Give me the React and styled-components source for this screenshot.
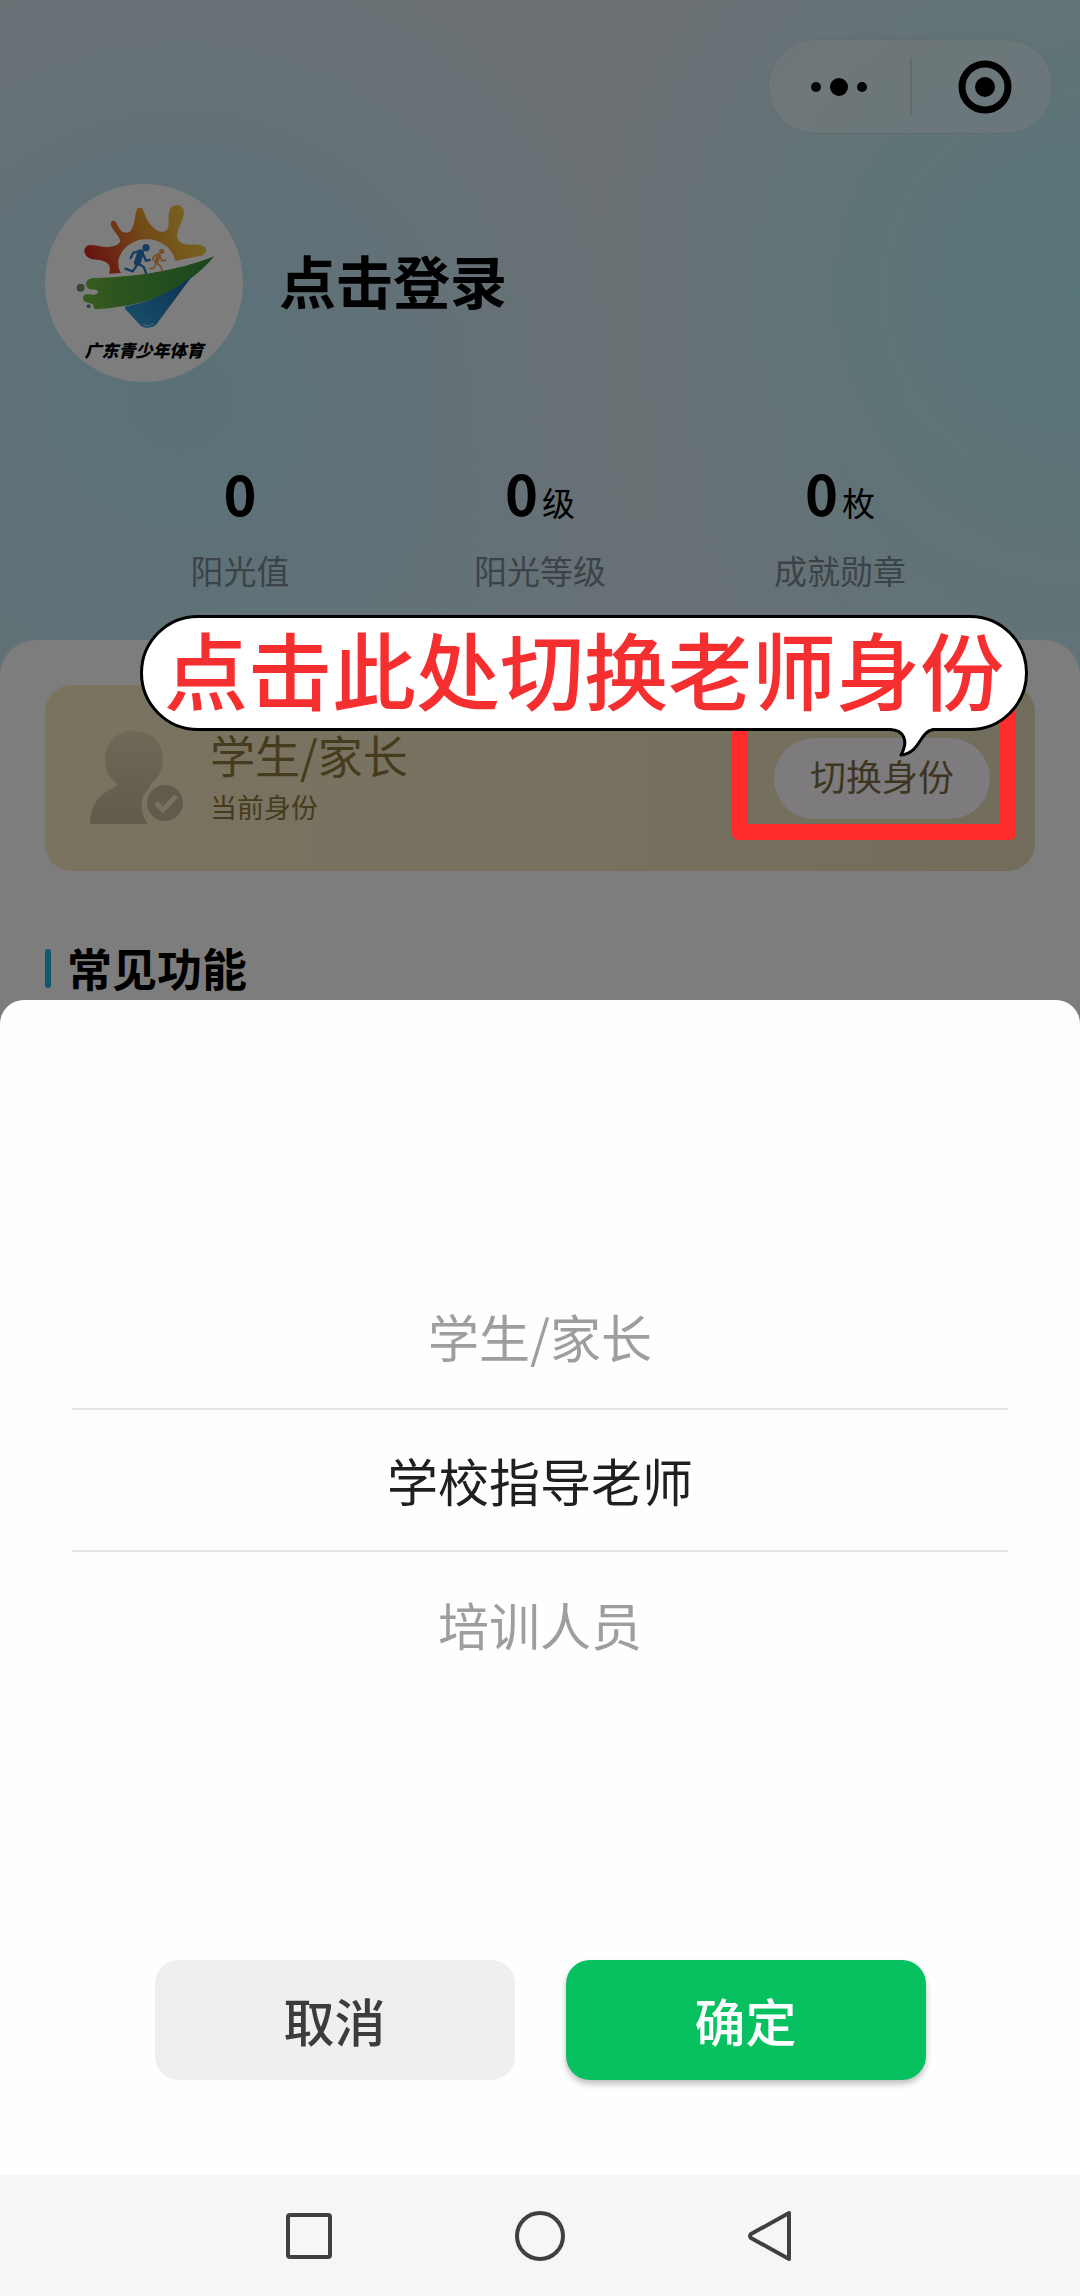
import React, { useState } from 'react';
import styled, { createGlobalStyle } from 'styled-components';

const GlobalStyle = createGlobalStyle`
  * {
    box-sizing: border-box;
  }
  body {
    margin: 0;
    background-color: #808080;
    font-family: "Noto Sans CJK SC", "Noto Sans", sans-serif;
  }
  button {
    margin: 0;
    padding: 0;
    border: 0;
    background: none;
    color: inherit;
    font: inherit;
    cursor: pointer;
  }
`;

const Page = styled.div`
  display: flex;
  flex-direction: column;
  min-height: 100vh;
  background-color: #7d7d7d;
`;

const Home = styled.main`
  position: relative;
  overflow: hidden;
  background:
    radial-gradient(circle at 100% 290px, #b4eef4 0, #bbedf4 150px, transparent 480px),
    radial-gradient(circle at 180px 400px, #b8e7f4 0, #bfe7f4 130px, transparent 460px),
    linear-gradient(180deg, #dae6ef 0, #dae7ef 420px, #d1e6ef 640px);
`;

const Mask = styled.div`
  position: absolute;
  inset: 0;
  z-index: 1;
  background-color: rgba(0, 0, 0, 0.51);
`;

const TopBar = styled.header`
  display: flex;
  justify-content: flex-end;
  padding: 39px 27px 0;
`;

const Capsule = styled.div`
  display: grid;
  grid-template-columns: 1fr 2px 1fr;
  align-items: center;
  width: 285px;
  height: 95px;
  border: 1px solid #d0dce0;
  border-radius: 48px;
  background-color: rgba(255, 255, 255, 0.4);
  & button {
    display: flex;
    align-items: center;
    justify-content: center;
    height: 100%;
  }
  & button + span + button {
    padding-left: 6px;
  }
`;

const CapsuleLine = styled.span`
  height: 58px;
  background-color: #d0d8da;
`;

const Profile = styled.section`
  display: flex;
  align-items: center;
  gap: 36px;
  padding: 50px 45px 0;
`;

const Avatar = styled.div`
  display: flex;
  flex-direction: column;
  align-items: center;
  width: 198px;
  height: 198px;
  overflow: hidden;
  border-radius: 50%;
  background-color: #fff;
`;

const AvatarText = styled.span`
  font-size: 17px;
  font-style: italic;
  font-weight: 900;
  line-height: 36px;
`;

const LoginButton = styled.button`
  && {
    padding-bottom: 8px;
    font-size: 57px;
    font-weight: 700;
    line-height: 80px;
  }
`;

const Stats = styled.section`
  display: grid;
  grid-template-columns: repeat(3, 1fr);
  padding: 68px 90px 46px;
`;

const Stat = styled.div`
  display: flex;
  flex-direction: column;
  align-items: center;
  gap: 12px;
`;

const StatValue = styled.strong`
  font-size: 56px;
  font-weight: 700;
  line-height: 84px;
  & small {
    margin-left: 4px;
    font-size: 33px;
    font-weight: 400;
    line-height: 33px;
  }
`;

const StatLabel = styled.span`
  color: #7a8a92;
  font-size: 33px;
  line-height: 48px;
`;

const Body = styled.section`
  padding: 45px 45px 0;
  border-radius: 36px 36px 0 0;
  background-color: #fff;
`;

const IdentityCard = styled.div`
  display: flex;
  align-items: center;
  height: 186px;
  padding: 0 45px;
  border-radius: 27px;
  background: linear-gradient(90deg, #f6ebc4 0, #f5e8c4 45%, #e8deba 100%);
`;

const Identity = styled.div`
  display: flex;
  flex: 1;
  flex-direction: column;
  margin-left: 26px;
  padding-bottom: 2px;
  color: #8d7b3c;
`;

const IdentityName = styled.span`
  font-size: 45px;
  line-height: 60px;
`;

const IdentityHint = styled.span`
  font-size: 27px;
  line-height: 44px;
`;

const SwitchBox = styled.div`
  position: relative;
`;

const SwitchButton = styled.button`
  && {
    width: 216px;
    height: 81px;
    padding-bottom: 6px;
    border-radius: 41px;
    background-color: #fffaff;
    color: #7f6d42;
    font-size: 36px;
  }
`;

// guide marks, drawn above the mask
const Highlight = styled.div`
  position: absolute;
  z-index: 2;
  top: -48px;
  right: -26px;
  bottom: -21px;
  left: -42px;
  border: 16px solid #ff2c2c;
  border-radius: 6px;
  pointer-events: none;
`;

const Callout = styled.div`
  position: absolute;
  z-index: 3;
  top: -123px;
  right: -38px;
  height: 116px;
  padding: 0 21px;
  border: 3px solid #000;
  border-radius: 58px;
  background-color: #fff;
  color: #f52f2f;
  font-size: 84px;
  font-weight: 500;
  line-height: 100px;
  white-space: nowrap;
  & svg {
    position: absolute;
    right: 90px;
    bottom: -31px;
  }
`;

const SectionTitle = styled.h2`
  display: flex;
  align-items: center;
  gap: 16px;
  margin: 65px 0 0;
  font-size: 45px;
  font-weight: 700;
  line-height: 64px;
  &::before {
    width: 6px;
    height: 39px;
    border-radius: 3px;
    background-color: #24b4dc;
    content: "";
  }
`;

const Sheet = styled.section`
  display: flex;
  flex: 1;
  flex-direction: column;
  justify-content: space-between;
  padding: 120px 72px 95px;
  border-radius: 24px 24px 0 0;
  background-color: #fefefe;
`;

const Picker = styled.div`
  display: flex;
  flex-direction: column;
  justify-content: center;
  height: 720px;
`;

const Option = styled.button`
  && {
    height: 144px;
    border-top: 2px solid ${props => props.$active ? '#e5e5e5' : 'transparent'};
    border-bottom: 2px solid ${props => props.$active ? '#e5e5e5' : 'transparent'};
    color: ${props => props.$active ? '#1f1f1f' : '#9e9e9e'};
    font-size: 51px;
  }
`;

const Actions = styled.div`
  display: flex;
  justify-content: center;
  gap: 51px;
`;

const Action = styled.button`
  && {
    width: 360px;
    height: 120px;
    border-radius: 24px;
    background-color: ${props => props.$primary ? '#07c160' : '#efefef'};
    box-shadow: ${props => props.$primary ? '0 4px 6px rgba(0, 0, 0, 0.25)' : 'none'};
    color: ${props => props.$primary ? '#fff' : '#3c3c3c'};
    font-size: 51px;
    font-weight: 500;
  }
`;

const SystemNav = styled.nav`
  display: flex;
  align-items: center;
  justify-content: center;
  gap: 177px;
  height: 121px;
  background-color: #f6f6f6;
  & button {
    display: flex;
  }
`;

const Logo = () => (
  <svg width="198" height="148" viewBox="-45 12 594 444">
    <defs>
      <linearGradient id="sun" x1="0" y1="0.6" x2="1" y2="0.3">
        <stop offset="0" stopColor="#d62a1c" />
        <stop offset="0.25" stopColor="#e0602a" />
        <stop offset="0.5" stopColor="#eb982c" />
        <stop offset="1" stopColor="#f5d44a" />
      </linearGradient>
      <linearGradient id="grass" x1="0" y1="0" x2="1" y2="0">
        <stop offset="0" stopColor="#72b83e" />
        <stop offset="1" stopColor="#2f9040" />
      </linearGradient>
      <linearGradient id="sea" x1="0" y1="1" x2="1" y2="0">
        <stop offset="0" stopColor="#32a6da" />
        <stop offset="1" stopColor="#1a62a6" />
      </linearGradient>
    </defs>
    <path fill="url(#sun)" d="M147 281C152 264 150 254 138 247C122 236 102 242 86 233C68 224 68 198 90 195C112 194 132 206 158 199C174 196 182 188 180 180C174 162 156 150 152 132C152 122 162 118 168 127C176 142 180 156 196 158C212 158 218 146 222 128C226 108 228 92 233 84L246 84C254 96 256 112 266 126C276 142 288 152 302 155C320 157 327 146 326 124C325 94 328 78 350 75C370 76 375 92 370 110C362 136 350 152 352 172C356 190 374 195 396 194C416 193 436 196 438 208C440 220 430 226 414 229L346 243C338 206 302 178 262 178C214 176 174 214 175 250C176 264 178 272 183 279Z" />
    <path fill="url(#grass)" d="M463 229C392 310 296 378 106 388C98 385 104 378 98 373C88 366 70 372 69 355C69 338 88 344 102 344C116 344 118 331 106 329C96 328 78 330 78 312C80 296 94 293 112 294C260 290 380 262 463 229Z" />
    <circle cx="62" cy="323" r="12" fill="#6f9460" />
    <circle cx="86" cy="379" r="6" fill="#6d7c94" />
    <path fill="url(#sea)" d="M397 287L296 424C286 440 278 443 262 443C250 443 244 440 238 433L195 386C193 380 198 378 206 377C276 364 344 330 397 287Z" />
    <path d="M248 433Q266 443 282 430" fill="none" stroke="#d8f0fc" strokeWidth="2" />
    <g fill="none" stroke="#2a7cc4" strokeLinecap="round" strokeLinejoin="round">
      <circle cx="258" cy="203" r="11" fill="#2a7cc4" stroke="none" />
      <path d="M242 218L232 248" strokeWidth="20" />
      <path d="M238 214L220 218L212 234M250 224L258 242L269 240M232 254L218 274L196 266M238 252L252 262L258 279" strokeWidth="7" />
    </g>
    <g fill="none" stroke="#f0a050" strokeLinecap="round" strokeLinejoin="round">
      <circle cx="305" cy="214" r="8" fill="#f0a050" stroke="none" />
      <path d="M296 226L289 246" strokeWidth="13" />
      <path d="M293 223L281 229L278 240M300 230L307 243L317 240M288 250L282 264L270 266M292 250L302 259L306 271" strokeWidth="5" />
    </g>
  </svg>
);

const PersonIcon = () => (
  <svg width="94" height="94" viewBox="0 0 94 94">
    <defs>
      <linearGradient id="person" x1="0" y1="0" x2="0" y2="1">
        <stop offset="0" stopColor="#e2d5b0" />
        <stop offset="1" stopColor="#c8ba9a" />
      </linearGradient>
    </defs>
    <path fill="url(#person)" d="M44 0C62 0 73 12 73 28C73 40 67 48 60 54C59 58 57 60 54 63C50 72 51 84 58 93H0C0 74 9 63 25 56C28 55 27 52 24 50C18 45 15 38 15 28C15 12 26 0 44 0Z" />
    <circle cx="75" cy="72" r="18" fill="#c8ba9a" />
    <path d="M66 72L73 79L86 65" fill="none" stroke="#f2e6c0" strokeWidth="5" />
  </svg>
);

const stats = [
  { label: '阳光值', value: 0 },
  { label: '阳光等级', value: 0, unit: '级' },
  { label: '成就勋章', value: 0, unit: '枚' },
];

const roles = ['学生/家长', '学校指导老师', '培训人员'];

export default function App() {
  const [role, setRole] = useState(roles[1]);

  return (
    <Page>
      <GlobalStyle />
      <Home>
        <TopBar>
          <Capsule>
            <button aria-label="更多">
              <svg width="58" height="20" viewBox="0 0 58 20">
                <circle cx="6" cy="10" r="5" />
                <circle cx="29" cy="10" r="9" />
                <circle cx="52" cy="10" r="5" />
              </svg>
            </button>
            <CapsuleLine />
            <button aria-label="关闭">
              <svg width="54" height="54" viewBox="0 0 54 54">
                <circle cx="27" cy="27" r="23" fill="none" stroke="#000" strokeWidth="7" />
                <circle cx="27" cy="27" r="10" />
              </svg>
            </button>
          </Capsule>
        </TopBar>
        <Profile>
          <Avatar>
            <Logo />
            <AvatarText>广东青少年体育</AvatarText>
          </Avatar>
          <LoginButton>点击登录</LoginButton>
        </Profile>
        <Stats>
          {stats.map(item => (
            <Stat key={item.label}>
              <StatValue>{item.value}{item.unit && <small>{item.unit}</small>}</StatValue>
              <StatLabel>{item.label}</StatLabel>
            </Stat>
          ))}
        </Stats>
        <Body>
          <IdentityCard>
            <PersonIcon />
            <Identity>
              <IdentityName>学生/家长</IdentityName>
              <IdentityHint>当前身份</IdentityHint>
            </Identity>
            <SwitchBox>
              <SwitchButton>切换身份</SwitchButton>
              <Highlight />
              <Callout>
                点击此处切换老师身份
                <svg width="48" height="36" viewBox="0 0 48 36">
                  <path d="M5 0V7C17 8 22 18 14 32C34 30 32 8 45 7V0Z" fill="#fff" />
                  <path d="M3 6.5C17 7 22 18 14 32C34 30 32 8 47 6.5" fill="none" stroke="#000" strokeWidth="3" strokeLinejoin="round" />
                </svg>
              </Callout>
            </SwitchBox>
          </IdentityCard>
          <SectionTitle>常见功能</SectionTitle>
        </Body>
        <Mask />
      </Home>
      <Sheet role="dialog" aria-label="切换身份">
        <Picker>
          {roles.map(name => (
            <Option key={name} $active={name === role} onClick={() => setRole(name)}>
              {name}
            </Option>
          ))}
        </Picker>
        <Actions>
          <Action>取消</Action>
          <Action $primary>确定</Action>
        </Actions>
      </Sheet>
      <SystemNav>
        <button aria-label="最近任务">
          <svg width="54" height="54" viewBox="0 0 54 54" fill="none" stroke="#404040" strokeWidth="4">
            <rect x="6" y="6" width="42" height="42" rx="2" />
          </svg>
        </button>
        <button aria-label="主屏幕">
          <svg width="54" height="54" viewBox="0 0 54 54" fill="none" stroke="#404040" strokeWidth="4">
            <circle cx="27" cy="27" r="23" />
          </svg>
        </button>
        <button aria-label="返回">
          <svg width="54" height="54" viewBox="0 0 54 54" fill="none" stroke="#404040" strokeWidth="4" strokeLinejoin="round">
            <path d="M45 4V50L7 29Q5 27 7 25Z" />
          </svg>
        </button>
      </SystemNav>
    </Page>
  );
}
